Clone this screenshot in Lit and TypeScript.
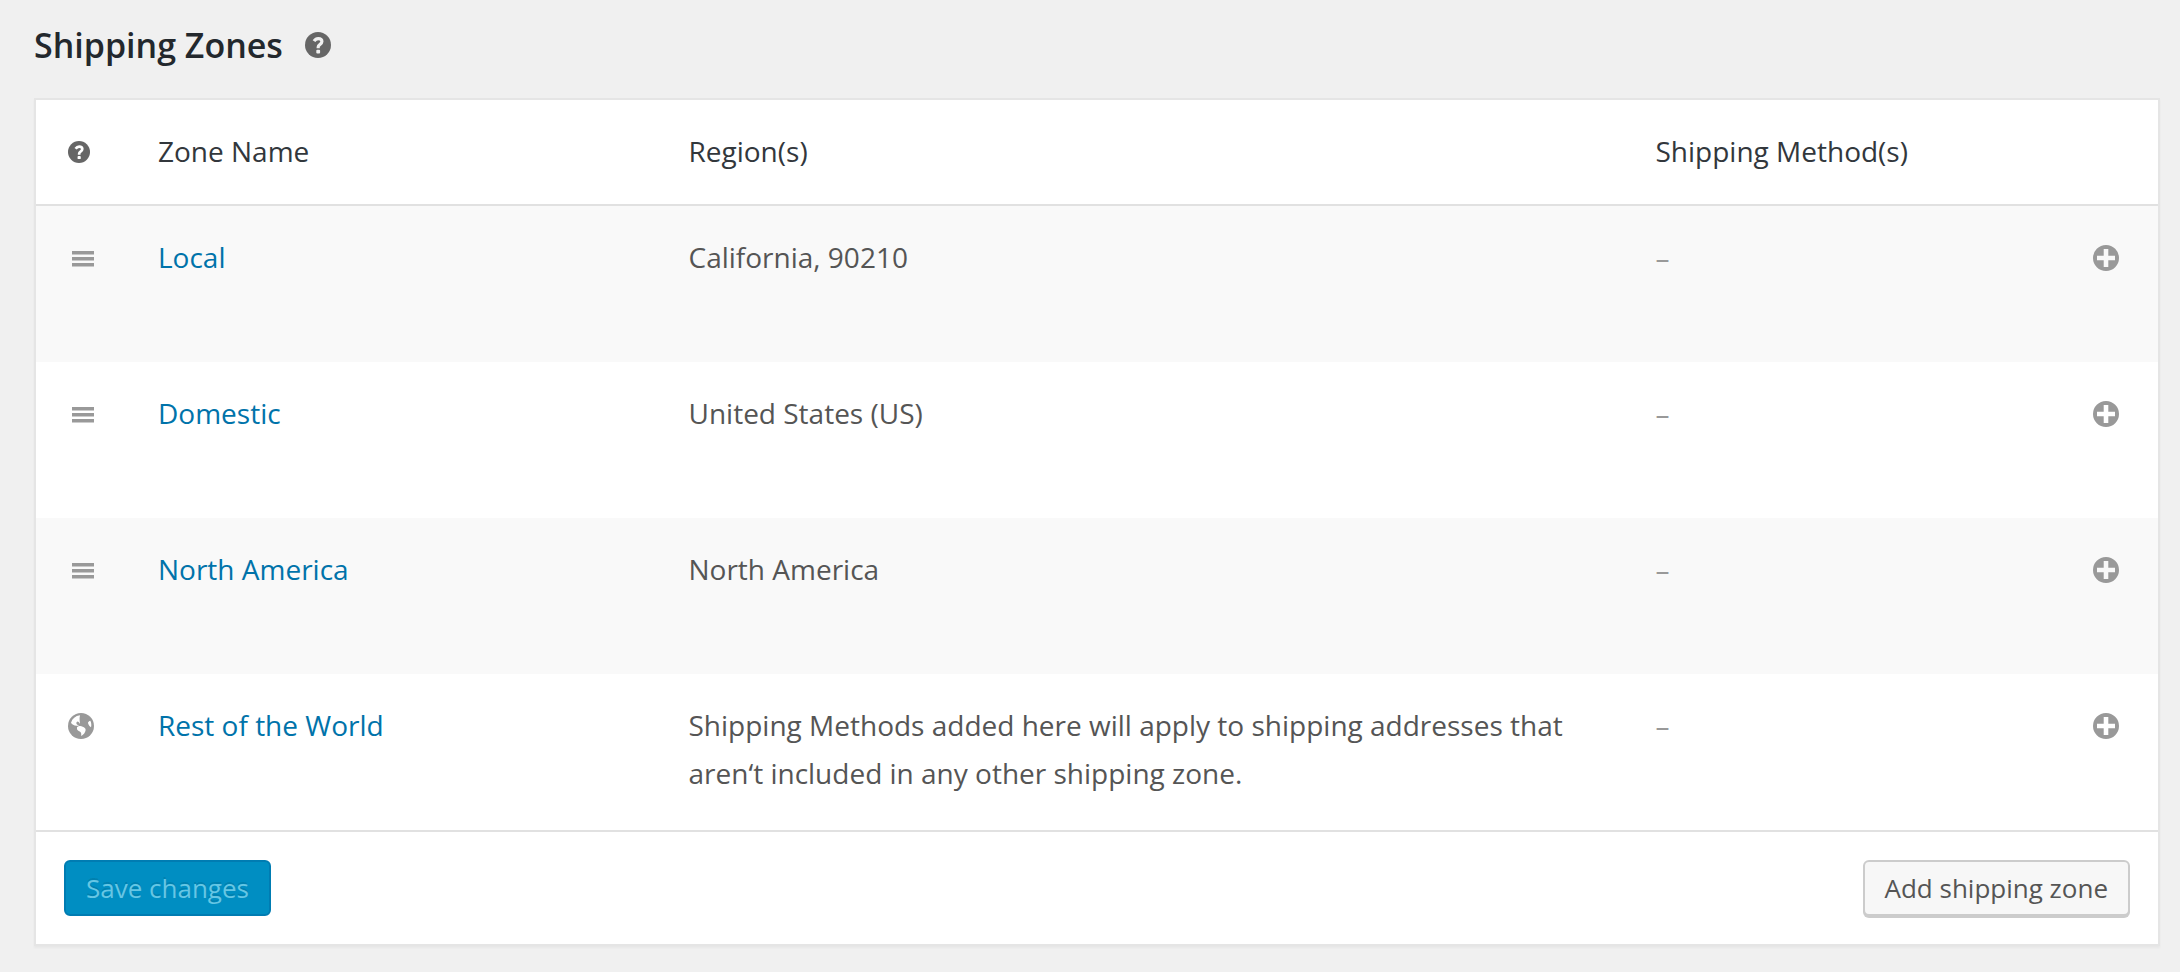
import { LitElement, html, css, svg } from "lit";
import { customElement, state } from "lit/decorators.js";

interface Zone {
  name: string;
  region: string;
  sortable: boolean;
}

const helpIcon = svg`
  <circle cx="13" cy="13" r="13" fill="currentColor"/>
  <path d="M9 9.2C10.2 7.3 11.5 6.6 13.2 6.6c2.2 0 3.7 1.1 3.7 2.9 0 1.5-.9 2.3-2.1 3.1-1.2.8-1.6 1.3-1.6 2.4v1.2" fill="none" stroke="var(--icon-hole)" stroke-width="3.2"/>
  <rect x="11.3" y="17.8" width="3.8" height="3.6" rx="1" fill="var(--icon-hole)"/>`;

@customElement("app-root")
export class AppRoot extends LitElement {
  static styles = css`
    :host {
      display: block;
      box-sizing: border-box;
      min-height: 100vh;
      padding: 18px 20px 26px 34px;
      background: #f0f0f0;
      color: #555;
      font: 28px/48px "Open Sans", sans-serif;
    }
    *, *::before, *::after { box-sizing: border-box; }
    svg { display: block; flex: none; }
    .heading {
      display: flex;
      align-items: center;
      gap: 22px;
      margin: 0 0 26px;
      color: #23282d;
      font-size: 34px;
      font-weight: 600;
      line-height: 54px;
    }
    .help { color: #666; --icon-hole: #f0f0f0; }
    .head .help { --icon-hole: #fff; }
    .card {
      background: #fff;
      border: 2px solid #e5e5e5;
      box-shadow: 0 2px 2px rgba(0, 0, 0, 0.04);
    }
    .zones {
      width: 100%;
      table-layout: fixed;
      border-collapse: separate;
      border-spacing: 0;
    }
    .col-sort { width: 94px; }
    .col-name, .col-method { width: 25%; }
    th, td {
      padding: 27px 28px;
      text-align: left;
      vertical-align: top;
      font-weight: 400;
    }
    td { height: 156px; }
    th { color: #32373c; border-bottom: 2px solid #e1e1e1; }
    tbody tr:nth-child(odd) { background: #f9f9f9; }
    .sort { padding: 27px 0 27px 32px; }
    .slot { display: flex; align-items: center; height: 50px; color: #999; }
    .grip { margin-left: 4px; }
    .link { color: #0073aa; text-decoration: none; }
    .methods {
      display: flex;
      justify-content: space-between;
      align-items: flex-start;
      padding-right: 11px;
      color: #999;
    }
    .add {
      height: 50px;
      padding: 0;
      border: 0;
      background: none;
      color: #999;
      cursor: pointer;
    }
    .footer {
      display: flex;
      justify-content: space-between;
      padding: 28px;
      border-top: 2px solid #e1e1e1;
    }
    .button {
      height: 56px;
      padding: 0 20px;
      border: 2px solid #ccc;
      border-radius: 6px;
      background: #f7f7f7;
      box-shadow: 0 2px 0 #ccc;
      color: #555;
      font: 26px/52px "Open Sans", sans-serif;
      cursor: pointer;
    }
    .primary {
      border-color: #007cb2;
      background: #008ec2;
      box-shadow: none;
      color: #66c6e4;
      text-shadow: 0 -2px 0 rgba(0, 0, 0, 0.1);
      cursor: default;
    }
  `;

  @state() private zones: Zone[] = [
    { name: "Local", region: "California, 90210", sortable: true },
    { name: "Domestic", region: "United States (US)", sortable: true },
    { name: "North America", region: "North America", sortable: true },
    {
      name: "Rest of the World",
      region:
        "Shipping Methods added here will apply to shipping addresses that aren‘t included in any other shipping zone.",
      sortable: false,
    },
  ];

  private grip() {
    return html`<svg class="grip" width="22" height="18" viewBox="0 0 22 18" aria-hidden="true">
      <path d="M0 2h22v3.6H0zM0 8h22v3.6H0zM0 14h22v3.6H0z" fill="currentColor"/>
    </svg>`;
  }

  private globe() {
    return html`<svg width="26" height="26" viewBox="0 0 78 78" aria-hidden="true">
      <circle cx="39" cy="39" r="39" fill="currentColor"/>
      <path fill="#fff" d="M36 7C22 9 13 17 9 29c3 5 9 8 16 9l9 0c-7-2-11-6-8-11 3-4 7-1 10 6 0-6-3-14 0-26z
        M27 43c4-4 11-5 17-2 5 2 9 4 9 10-1 8-6 14-13 18-1-3 1-7-2-11-3-4-9-4-11-9z
        M60 30c0-3 3-6 7-7 3 6 4 13 2 20-4-3-8-8-9-13z"/>
    </svg>`;
  }

  private row(zone: Zone) {
    return html`<tr>
      <td class="sort"><div class="slot">${zone.sortable ? this.grip() : this.globe()}</div></td>
      <td><a class="link" href="#">${zone.name}</a></td>
      <td>${zone.region}</td>
      <td>
        <div class="methods">
          <span>–</span>
          <button class="add" type="button" aria-label="Add shipping method to ${zone.name}">
            <svg width="26" height="26" viewBox="0 0 26 26" aria-hidden="true">
              <path fill="currentColor" fill-rule="evenodd" d="M13 0a13 13 0 1 0 0 26a13 13 0 1 0 0-26z
                M10.7 4h4.6v6.7H22v4.6h-6.7V22h-4.6v-6.7H4v-4.6h6.7z"/>
            </svg>
          </button>
        </div>
      </td>
    </tr>`;
  }

  render() {
    return html`
      <h2 class="heading">
        Shipping Zones
        <svg class="help" width="26" height="26" viewBox="0 0 26 26" aria-hidden="true">${helpIcon}</svg>
      </h2>
      <div class="card">
        <table class="zones">
          <colgroup>
            <col class="col-sort" />
            <col class="col-name" />
            <col />
            <col class="col-method" />
          </colgroup>
          <thead>
            <tr class="head">
              <th class="sort">
                <div class="slot">
                  <svg class="help" width="22" height="22" viewBox="0 0 26 26" aria-hidden="true">${helpIcon}</svg>
                </div>
              </th>
              <th scope="col">Zone Name</th>
              <th scope="col">Region(s)</th>
              <th scope="col">Shipping Method(s)</th>
            </tr>
          </thead>
          <tbody>
            ${this.zones.map((zone) => this.row(zone))}
          </tbody>
        </table>
        <div class="footer">
          <button class="button primary" type="button" disabled>Save changes</button>
          <button class="button" type="button">Add shipping zone</button>
        </div>
      </div>
    `;
  }
}
